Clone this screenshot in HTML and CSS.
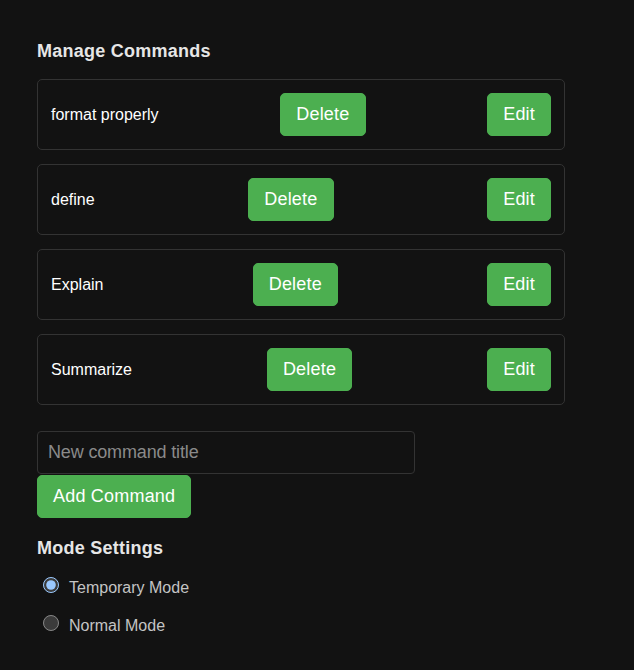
FILE: index.html
```html
<!DOCTYPE html>
<html lang="en">
<head>
<meta charset="utf-8">
<title>Manage Commands</title>
<link rel="stylesheet" href="styles.css">
</head>
<body>
<div class="container">
  <h3 class="section-title">Manage Commands</h3>
  <div class="command-list">
    <div class="command-row">
      <span class="command-name">format properly</span>
      <button class="btn">Delete</button>
      <button class="btn">Edit</button>
    </div>
    <div class="command-row">
      <span class="command-name">define</span>
      <button class="btn">Delete</button>
      <button class="btn">Edit</button>
    </div>
    <div class="command-row">
      <span class="command-name">Explain</span>
      <button class="btn">Delete</button>
      <button class="btn">Edit</button>
    </div>
    <div class="command-row">
      <span class="command-name">Summarize</span>
      <button class="btn">Delete</button>
      <button class="btn">Edit</button>
    </div>
  </div>
  <div class="add-form">
    <input class="text-input" type="text" placeholder="New command title">
    <button class="btn btn-add">Add Command</button>
  </div>
  <h3 class="section-title mode-title">Mode Settings</h3>
  <div class="mode-options">
    <label class="radio-row"><input class="radio" type="radio" name="mode" checked>Temporary Mode</label>
    <label class="radio-row"><input class="radio" type="radio" name="mode">Normal Mode</label>
  </div>
</div>
</body>
</html>
```

FILE: styles.css
```css
html, body {
  margin: 0;
  padding: 0;
  background: #121212;
  color-scheme: dark;
}

body {
  font-family: "Liberation Sans", Arial, sans-serif;
  color: #e0e0e0;
}

.container {
  width: 528px;
  padding: 41px 37px 20px;
}

.section-title {
  margin: 0 0 17px;
  font-size: 18px;
  font-weight: bold;
  letter-spacing: 0.25px;
  color: #e6e6e6;
  line-height: normal;
}

.command-list {
  display: flex;
  flex-direction: column;
  gap: 14px;
}

.command-row {
  display: flex;
  justify-content: space-between;
  align-items: center;
  padding: 13px;
  border: 1px solid #333;
  border-radius: 5px;
}

.command-name {
  font-size: 16px;
  color: #ffffff;
}

.btn {
  font-family: "Liberation Sans", Arial, sans-serif;
  font-size: 18px;
  letter-spacing: 0.2px;
  line-height: normal;
  padding: 10px 15px;
  border: 1px solid #4caf50;
  border-radius: 5px;
  background: #4caf50;
  color: #ffffff;
  cursor: pointer;
}

.add-form {
  margin-top: 26px;
  display: flex;
  flex-direction: column;
  align-items: flex-start;
  gap: 1px;
}

.text-input {
  width: 378px;
  box-sizing: border-box;
  font-family: "Liberation Sans", Arial, sans-serif;
  font-size: 18px;
  letter-spacing: -0.15px;
  line-height: normal;
  padding: 10px;
  border: 1px solid #333;
  border-radius: 4px;
  background: #121212;
  color: #e0e0e0;
  outline: none;
}

.text-input::placeholder {
  color: #8a8a8a;
}

.mode-title {
  margin-top: 20px;
  margin-bottom: 18px;
}

.mode-options {
  display: flex;
  flex-direction: column;
  gap: 18px;
}

.radio-row {
  display: block;
  font-size: 16px;
  color: #c4c4c4;
}

.radio {
  width: 16px;
  height: 16px;
  margin: 0 10px 0 6px;
  vertical-align: baseline;
}
```
